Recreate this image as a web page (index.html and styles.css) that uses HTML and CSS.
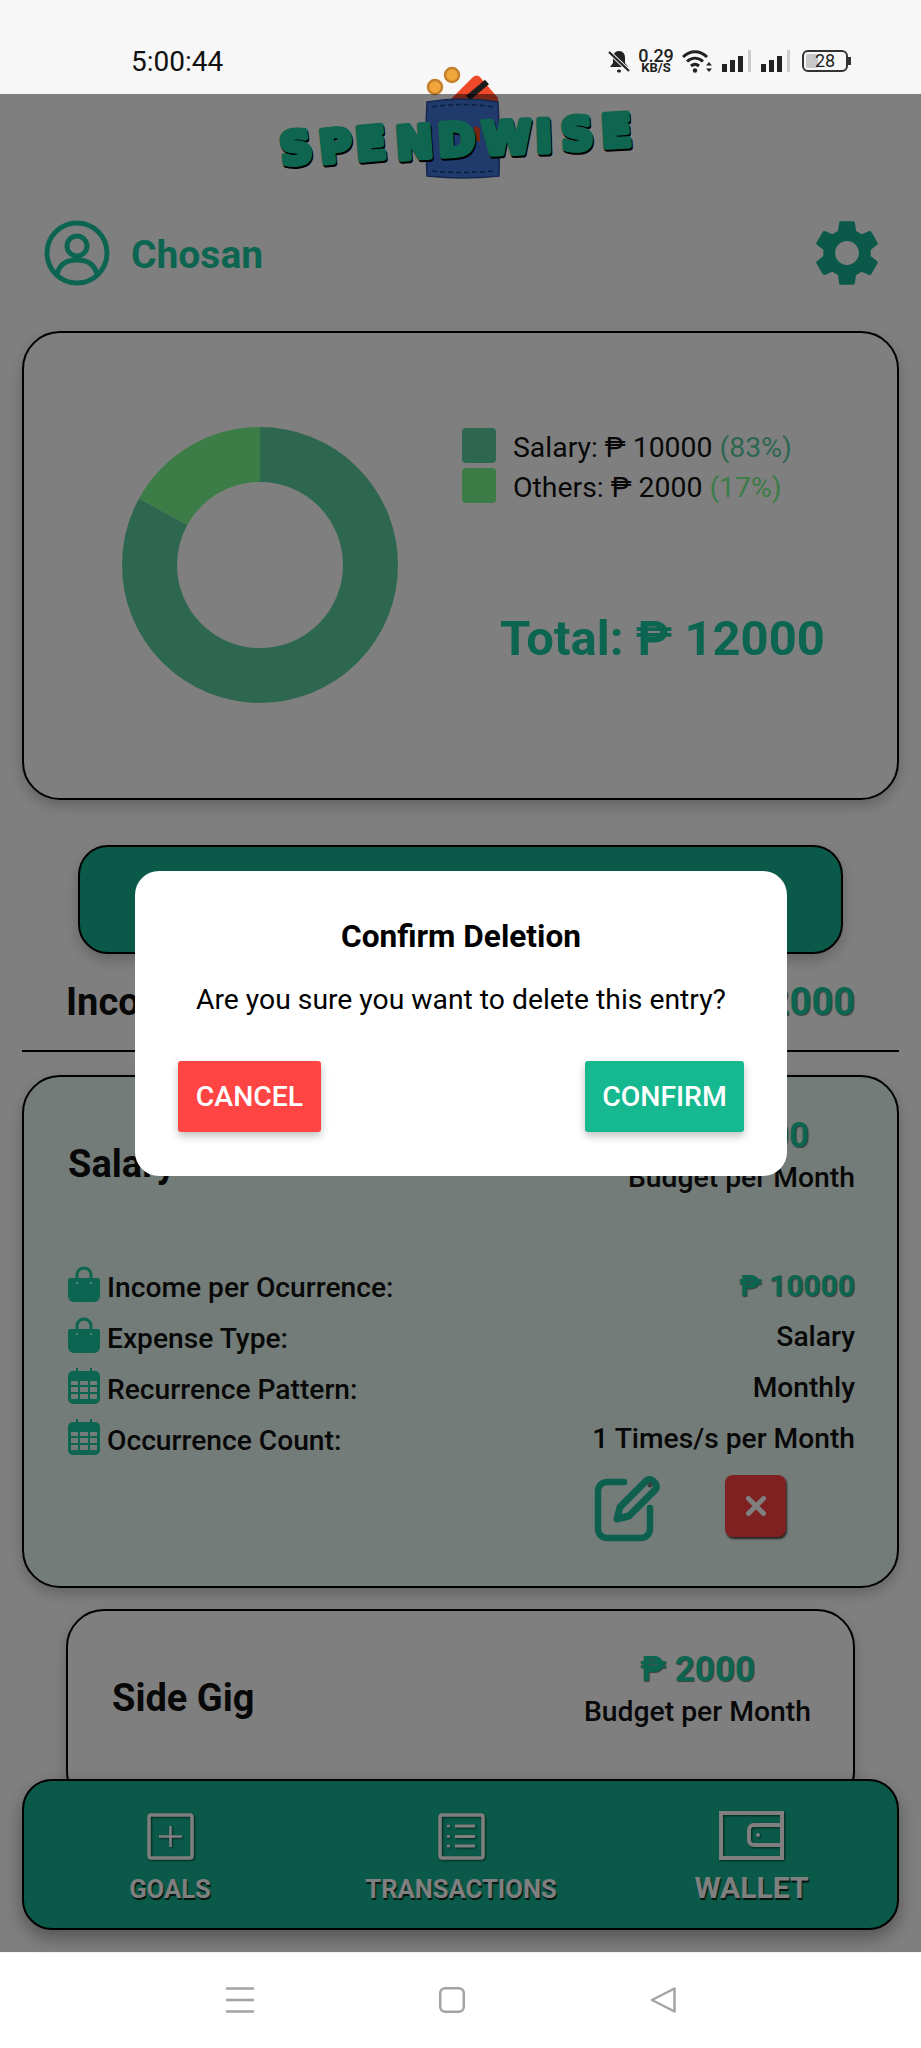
FILE: index.html
```html
<!DOCTYPE html>
<html lang="en">
<head>
  <meta charset="UTF-8" />
  <meta name="viewport" content="width=device-width, initial-scale=1.0"/>
  <title>SpendWise</title>
  <link rel="stylesheet" href="styles.css">
</head>
<body>
  <svg class="defs" width="0" height="0">
    <symbol id="bag" viewBox="0 0 32 36">
      <path d="M9 14V9a7 7 0 0 1 14 0v5" fill="none" stroke="currentColor" stroke-width="3"/>
      <path d="M2 12h28a2 2 0 0 1 2 2v16a6 6 0 0 1-6 6H6a6 6 0 0 1-6-6V14a2 2 0 0 1 2-2z" fill="currentColor"/>
      <circle cx="9" cy="17" r="1.2" fill="#9fe"/>
      <circle cx="23" cy="17" r="1.2" fill="#9fe"/>
    </symbol>
    <symbol id="cal" viewBox="0 0 32 36">
      <path d="M8 0h2v6H8zM22 0h2v6h-2z" fill="currentColor"/>
      <path fill-rule="evenodd" fill="currentColor" d="M5 3h22a5 5 0 0 1 5 5v23a5 5 0 0 1-5 5H5a5 5 0 0 1-5-5V8a5 5 0 0 1 5-5zM3 13v4h7v-4zM12 13v4h8v-4zM22 13v4h7v-4zM3 19v5h7v-5zM12 19v5h8v-5zM22 19v5h7v-5zM3 26v5h7v-5zM12 26v5h8v-5zM22 26v5h7v-5z"/>
    </symbol>
  </svg>

  <div class="phone">
    <div class="statusbar">
      <span class="clock">5:00:44</span>
      <div class="status-icons">
        <svg class="ic-bell" viewBox="0 0 22 23" width="22" height="23">
          <path d="M11 1c4 0 6 3 6 7v5l3 4H2l3-4V8c0-4 2-7 6-7z" fill="#222"/>
          <rect x="9" y="19.500" width="4" height="3" rx="1.500" fill="#222"/>
          <path d="M1 2l20 19" stroke="#f7f7f7" stroke-width="4"/>
          <path d="M1 2l20 19" stroke="#222" stroke-width="2.200"/>
        </svg>
        <div class="speed"><span>0.29</span><small>KB/S</small></div>
        <svg class="ic-wifi" viewBox="0 0 31 24" width="31" height="24">
          <path d="M1 8c7-7 17-7 24 0M5 12.500c5-4.500 11-4.500 16 0M9 17c3-2.500 5-2.500 8 0" fill="none" stroke="#222" stroke-width="3"/>
          <circle cx="13" cy="21.500" r="2.200" fill="#222"/>
          <path d="M27 13l3 3.500h-6zM27 23l-3-3.500h6z" fill="#222"/>
        </svg>
        <div class="signal"><i class="b1"></i><i class="b2"></i><i class="b3"></i><i class="b4"></i></div>
        <div class="signal"><i class="b1"></i><i class="b2"></i><i class="b3"></i><i class="b4"></i></div>
        <div class="battery"><b></b><span>28</span></div>
      </div>
    </div>

    <main class="app">
      <svg class="logo" viewBox="0 0 360 120" width="360" height="120">
        <circle cx="156" cy="27" r="7" fill="#f0a63a" stroke="#c4802c" stroke-width="2.500"/>
        <circle cx="173" cy="15" r="7" fill="#f0a63a" stroke="#c4802c" stroke-width="2.500"/>
        <path d="M169 42L194 17q4-3 7 0L219 38v6z" fill="#ee4a2a"/>
        <path d="M189 38L208 22" stroke="#1c1c1c" stroke-width="6"/>
        <path d="M148 42q36-6 71 0q2 36 1 74q-36 4-72 0q-2-38 0-74z" fill="#3f74d6" stroke="#2a4f9c" stroke-width="1.500"/>
        <path d="M153 47q30-5 61 0M153 111q30 3 62 0" fill="none" stroke="#1d3a78" stroke-width="1.500" stroke-dasharray="5 3"/>
        <path d="M195 66l6 2v14l-6-2z" fill="#ee4a2a"/>
        <text class="logo-shadow" x="3 42 78 118 160 204 257 283 323" y="105 103 100 99 96 94 92 90 87" rotate="-7 -6 -5 -4 -3 -2 -2 -3 -3" transform="translate(1 2)">SPENDWISE</text>
        <text class="logo-text" x="3 42 78 118 160 204 257 283 323" y="105 103 100 99 96 94 92 90 87" rotate="-7 -6 -5 -4 -3 -2 -2 -3 -3">SPENDWISE</text>
      </svg>

      <div class="content">
        <div class="user-row">
          <div class="user">
            <svg viewBox="0 0 66 66" width="66" height="66" fill="none" stroke="currentColor" stroke-width="5">
              <circle cx="33" cy="33" r="30"/>
              <circle cx="33" cy="26" r="10"/>
              <path d="M13 55c2-11 10-15 20-15s18 4 20 15"/>
            </svg>
            <span>Chosan</span>
          </div>
          <svg class="gear" viewBox="2.500 2 19 20" width="64" height="66">
            <path fill="currentColor" d="M19.140 12.940c.04-.3.06-.61.06-.94 0-.32-.02-.64-.07-.94l2.030-1.580c.18-.14.23-.41.12-.61l-1.920-3.320c-.12-.22-.37-.29-.59-.22l-2.390.96c-.5-.38-1.030-.7-1.620-.94l-.36-2.540c-.04-.24-.24-.41-.48-.41h-3.840c-.24 0-.43.17-.47.41l-.36 2.540c-.59.24-1.130.57-1.620.94l-2.390-.96c-.22-.08-.47 0-.59.22L2.740 8.870c-.12.21-.08.47.12.61l2.030 1.580c-.05.3-.09.63-.09.94s.02.64.07.94l-2.030 1.580c-.18.14-.23.41-.12.61l1.920 3.320c.12.22.37.29.59.22l2.390-.96c.5.38 1.030.7 1.620.94l.36 2.540c.05.24.24.41.48.41h3.840c.24 0 .44-.17.47-.41l.36-2.540c.59-.24 1.130-.56 1.620-.94l2.390.96c.22.08.47 0 .59-.22l1.920-3.320c.12-.22.07-.47-.12-.61l-2.010-1.580zM12 15.600c-1.980 0-3.600-1.620-3.600-3.600s1.620-3.600 3.600-3.600 3.600 1.620 3.600 3.600-1.620 3.600-3.600 3.600z"/>
          </svg>
        </div>

        <section class="chart-card">
          <svg class="donut" viewBox="0 0 276 276" width="276" height="276">
            <g transform="rotate(-90 138 138)" fill="none" stroke-width="55">
              <circle cx="138" cy="138" r="110.500" pathLength="100" stroke="#5cce9f" stroke-dasharray="83 17"/>
              <circle cx="138" cy="138" r="110.500" pathLength="100" stroke="#76f88e" stroke-dasharray="17 83" stroke-dashoffset="-83"/>
            </g>
          </svg>
          <div class="chart-side">
            <ul class="legend">
              <li><i class="swatch swatch-a"></i><span>Salary: ₱ 10000 <em class="pct-a">(83%)</em></span></li>
              <li><i class="swatch swatch-b"></i><span>Others: ₱ 2000 <em class="pct-b">(17%)</em></span></li>
            </ul>
            <div class="total">Total: ₱ 12000</div>
          </div>
        </section>

        <div class="add-btn"></div>

        <div class="summary">
          <span class="summary-label">Income</span>
          <span class="summary-value">₱ 12000</span>
        </div>

        <section class="card card-open">
          <div class="card-head">
            <span class="card-name">Salary</span>
            <div class="card-budget">
              <strong>₱ 10000</strong>
              <span>Budget per Month</span>
            </div>
          </div>
          <div class="details">
            <div class="row">
              <span class="row-label"><svg class="row-ic"><use href="#bag"/></svg>Income per Ocurrence:</span>
              <span class="row-value money">₱ 10000</span>
            </div>
            <div class="row">
              <span class="row-label"><svg class="row-ic"><use href="#bag"/></svg>Expense Type:</span>
              <span class="row-value">Salary</span>
            </div>
            <div class="row">
              <span class="row-label"><svg class="row-ic"><use href="#cal"/></svg>Recurrence Pattern:</span>
              <span class="row-value">Monthly</span>
            </div>
            <div class="row">
              <span class="row-label"><svg class="row-ic"><use href="#cal"/></svg>Occurrence Count:</span>
              <span class="row-value">1 Times/s per Month</span>
            </div>
            <div class="actions">
              <svg class="edit" viewBox="0 0 70 70" width="70" height="70" fill="none" stroke="currentColor" stroke-linecap="round" stroke-linejoin="round">
                <path d="M30 10H13a9 9 0 0 0-9 9v38a9 9 0 0 0 9 9h34a9 9 0 0 0 9-9V36" stroke-width="6.500"/>
                <path d="M23 47l3-12L52 9a5 5 0 0 1 7 0l2 2a5 5 0 0 1 0 7L35 44z" stroke-width="7"/>
                <circle cx="56" cy="13" r="2.500" fill="#737c78" stroke="none"/>
              </svg>
              <button class="del" type="button">
                <svg viewBox="0 0 24 24" width="26" height="26"><path d="M5 5l14 14M19 5L5 19" stroke="#fff" stroke-width="4.500" stroke-linecap="round"/></svg>
              </button>
            </div>
          </div>
        </section>

        <section class="card card-closed">
          <div class="card-head">
            <span class="card-name">Side Gig</span>
            <div class="card-budget">
              <strong>₱ 2000</strong>
              <span>Budget per Month</span>
            </div>
          </div>
        </section>
      </div>

      <nav class="tabbar">
        <a class="tab">
          <svg viewBox="0 0 47 47" width="47" height="47" fill="none" stroke="currentColor" stroke-width="3.500"><rect x="2" y="2" width="43" height="43" rx="2"/><path d="M23.500 13v21M12 23.500h23" stroke-width="2.500"/></svg>
          <span>GOALS</span>
        </a>
        <a class="tab">
          <svg viewBox="0 0 47 47" width="47" height="47" fill="none" stroke="currentColor" stroke-width="3.500"><rect x="2" y="2" width="43" height="43" rx="2"/><path d="M17 13h20M17 23.500h20M17 33h20" stroke-width="3"/><path d="M9 13h3M9 23.500h3M9 33h3" stroke-width="2.500"/></svg>
          <span>TRANSACTIONS</span>
        </a>
        <a class="tab tab-wallet">
          <svg viewBox="0 0 65 49" width="65" height="49" fill="none" stroke="currentColor" stroke-width="4"><path d="M63 14V2H2v45h61V34"/><path d="M63 14H35a5 5 0 0 0-5 5v10a5 5 0 0 0 5 5h28z"/><circle cx="39" cy="24" r="2" fill="currentColor" stroke="none"/></svg>
          <span>WALLET</span>
        </a>
      </nav>

      <div class="overlay">
        <div class="dialog">
          <h2>Confirm Deletion</h2>
          <p>Are you sure you want to delete this entry?</p>
          <div class="dialog-actions">
            <button class="btn btn-cancel" type="button">CANCEL</button>
            <button class="btn btn-confirm" type="button">CONFIRM</button>
          </div>
        </div>
      </div>
    </main>

    <div class="navbar">
      <svg viewBox="0 0 28 26" width="28" height="26" fill="none" stroke="#a3a3a3" stroke-width="2.500"><path d="M0 1.500h28M0 13h28M0 24.500h28"/></svg>
      <svg viewBox="0 0 26 26" width="26" height="26" fill="none" stroke="#a3a3a3" stroke-width="2.500"><rect x="1.250" y="1.250" width="23.500" height="23.500" rx="5"/></svg>
      <svg viewBox="0 0 26 26" width="26" height="26" fill="none" stroke="#a3a3a3" stroke-width="2.500" stroke-linejoin="round"><path d="M24.500 1.500v23L2 13z"/></svg>
    </div>
  </div>
</body>
</html>
```

FILE: styles.css
```css
* {
  box-sizing: border-box;
}
body {
  margin: 0;
  font-family: Roboto, "Liberation Sans", sans-serif;
  color: #111;
  background: #fff;
}
.defs {
  position: absolute;
}
.phone {
  width: 921px;
  height: 2048px;
  display: flex;
  flex-direction: column;
  overflow: hidden;
}

/* status bar */
.statusbar {
  height: 94px;
  flex: none;
  background: #f7f7f7;
  display: flex;
  align-items: center;
  padding: 28px 73px 0 131px;
  justify-content: space-between;
}
.clock {
  font-size: 28px;
  color: #111;
}
.status-icons {
  display: flex;
  align-items: center;
  gap: 9px;
}
.speed {
  display: flex;
  flex-direction: column;
  align-items: center;
  width: 34px;
  font-size: 18px;
  line-height: 13px;
  color: #222;
  font-weight: 500;
}
.speed small {
  font-size: 13px;
  line-height: 11px;
  font-weight: 700;
}
.signal {
  display: flex;
  align-items: flex-end;
  gap: 3px;
  height: 22px;
  width: 30px;
}
.signal i {
  width: 5px;
  background: #222;
}
.signal .b1 { height: 8px; }
.signal .b2 { height: 12px; }
.signal .b3 { height: 16px; }
.signal .b4 { height: 22px; background: #ccc; width: 3px; margin-left: 2px; }
.battery {
  position: relative;
  width: 46px;
  height: 22px;
  border: 2px solid #333;
  border-radius: 6px;
  margin-left: 2px;
  font-size: 18px;
  line-height: 18px;
  text-align: center;
  color: #222;
}
.battery b {
  position: absolute;
  left: 2px;
  top: 2px;
  bottom: 2px;
  width: 12px;
  background: #c8c8c8;
  border-radius: 2px;
}
.battery span {
  position: relative;
}
.battery::after {
  content: "";
  position: absolute;
  right: -5px;
  top: 5px;
  width: 3px;
  height: 8px;
  background: #333;
}

/* app */
.app {
  position: relative;
  flex: 1;
  display: flex;
  flex-direction: column;
  min-height: 0;
  background: #fff;
}
.logo {
  flex: none;
  display: block;
  margin: -34px 0 -4px 279px;
  overflow: visible;
}
.logo text {
  font-family: "DejaVu Sans", sans-serif;
  font-weight: 700;
  font-size: 44px;
  stroke-linejoin: round;
}
.logo-text {
  fill: #1ecca0;
  stroke: #1ecca0;
  stroke-width: 6px;
}
.logo-shadow {
  fill: #000;
  stroke: #000;
  stroke-width: 6px;
}
.content {
  flex: 1;
  min-height: 0;
  overflow: hidden;
  padding: 44px 22px 0;
}
.user-row {
  display: flex;
  align-items: center;
  justify-content: space-between;
  padding: 0 20px 0 22px;
  height: 66px;
  color: #19cba2;
}
.user {
  display: flex;
  align-items: center;
  gap: 21px;
  font-size: 39px;
  font-weight: 700;
}
.user span {
  margin-top: 3px;
}
.gear {
  color: #16b592;
}

/* chart */
.chart-card {
  margin-top: 45px;
  height: 469px;
  border: 2px solid #000;
  border-radius: 38px;
  box-shadow: 0 6px 14px rgba(0, 0, 0, 0.22);
  display: flex;
  padding: 94px 0 0 98px;
}
.donut {
  flex: none;
}
.chart-side {
  margin-left: 64px;
}
.legend {
  list-style: none;
  margin: 1px 0 0;
  padding: 0;
}
.legend li {
  display: flex;
  align-items: center;
  gap: 17px;
  height: 35px;
  margin-bottom: 5px;
  font-size: 28.400px;
}
.legend span {
  padding-top: 3px;
}
.legend em {
  font-style: normal;
}
.pct-a { color: #5cce9f; }
.pct-b { color: #76f88e; }
.swatch {
  width: 34px;
  height: 35px;
  border-radius: 4px;
  flex: none;
}
.swatch-a { background: #5cce9f; }
.swatch-b { background: #76f88e; }
.total {
  margin: 106px 0 0 38px;
  font-size: 49px;
  line-height: 60px;
  font-weight: 700;
  color: #19cba2;
  white-space: nowrap;
}

.add-btn {
  margin: 45px 56px 0;
  height: 109px;
  background: #16b592;
  border: 2px solid #000;
  border-radius: 30px;
  box-shadow: 0 6px 14px rgba(0, 0, 0, 0.22);
}
.summary {
  height: 98px;
  border-bottom: 2px solid #000;
  display: flex;
  justify-content: space-between;
  align-items: center;
  padding: 0 44px 0 44px;
  font-size: 38px;
  font-weight: 700;
}
.summary-value {
  color: #19cba2;
  text-shadow: 1px 1px 1px rgba(0, 0, 0, 0.5);
}

/* income cards */
.card {
  border: 2px solid #000;
  border-radius: 38px;
  box-shadow: 0 6px 14px rgba(0, 0, 0, 0.22);
  padding: 37px 42px 0 44px;
  margin-top: 23px;
}
.card-open {
  height: 513px;
  background: #e6f8f0;
}
.card-closed {
  margin: 21px 44px 0;
  height: 200px;
  background: #fff;
}
.card-head {
  display: flex;
  justify-content: space-between;
  align-items: center;
}
.card-name {
  font-size: 38px;
  font-weight: 700;
  margin-top: 16px;
}
.card-budget {
  display: flex;
  flex-direction: column;
  align-items: center;
  font-size: 28.300px;
  font-weight: 500;
}
.card-budget strong {
  font-size: 35px;
  line-height: 44px;
  font-weight: 700;
  color: #19cba2;
  text-shadow: 1px 1px 1px rgba(0, 0, 0, 0.5);
}
.card-budget span {
  line-height: 40px;
}
.details {
  margin-top: 40px;
  padding-top: 23px;
  border-top: 1px solid #eefbf5;
}
.row {
  height: 51px;
  display: flex;
  justify-content: space-between;
  align-items: center;
  font-size: 28.200px;
  font-weight: 500;
}
.row-label {
  display: flex;
  align-items: center;
  gap: 7px;
}
.row-ic {
  width: 32px;
  height: 36px;
  margin-top: -8px;
  color: #19cba2;
}
.row-value {
  margin-top: -4px;
}
.money {
  font-size: 30px;
  font-weight: 700;
  color: #19cba2;
  text-shadow: 1px 1px 1px rgba(0, 0, 0, 0.5);
}
.actions {
  display: flex;
  justify-content: flex-end;
  align-items: flex-start;
  gap: 61px;
  padding: 6px 69px 0 0;
}
.edit {
  color: #19c09a;
}
.del {
  width: 61px;
  height: 62px;
  margin-top: 3px;
  padding: 0;
  border: none;
  border-radius: 8px;
  background: #ff4240;
  box-shadow: 1px 2px 2px rgba(0, 0, 0, 0.7);
  display: flex;
  align-items: center;
  justify-content: center;
}

/* bottom tabs */
.tabbar {
  position: relative;
  flex: none;
  height: 151px;
  margin: 0 22px 22px;
  background: #16b592;
  border: 2px solid #000;
  border-radius: 30px;
  box-shadow: 0 8px 18px rgba(0, 0, 0, 0.35);
  display: grid;
  grid-template-columns: 292px 290px 1fr;
  padding-top: 32px;
  color: #fff;
}
.tab {
  display: flex;
  flex-direction: column;
  align-items: center;
  font-size: 25.600px;
  font-weight: 700;
  text-shadow: 1px 2px 1px rgba(0, 0, 0, 0.8);
}
.tab svg {
  filter: drop-shadow(1px 1px 1px rgba(0, 0, 0, 0.6));
  margin-bottom: 14px;
}
.tab-wallet {
  font-size: 30px;
  margin-top: -2px;
}
.tab-wallet svg {
  margin-bottom: 10px;
}

/* dialog */
.overlay {
  position: absolute;
  inset: 0;
  background: rgba(0, 0, 0, 0.5);
}
.dialog {
  position: absolute;
  left: 135px;
  top: 777px;
  width: 652px;
  height: 305px;
  background: #fff;
  border-radius: 24px;
  padding: 44px 43px 0;
  text-align: center;
  color: #000;
}
.dialog h2 {
  margin: 0;
  font-size: 31.600px;
  line-height: 44px;
  font-weight: 700;
}
.dialog p {
  margin: 21px 0 0;
  font-size: 28.300px;
  line-height: 40px;
}
.dialog-actions {
  display: flex;
  justify-content: space-between;
  margin-top: 41px;
}
.btn {
  height: 71px;
  border: none;
  border-radius: 3px;
  color: #fff;
  font-family: inherit;
  font-size: 28.400px;
  font-weight: 500;
  padding: 0;
  box-shadow: 0 4px 8px rgba(0, 0, 0, 0.25);
}
.btn-cancel {
  width: 143px;
  background: #ff4444;
}
.btn-confirm {
  width: 159px;
  background: #16b890;
}

/* android nav */
.navbar {
  height: 96px;
  flex: none;
  background: #fff;
  border-top: 1px solid #f4f4f4;
  display: flex;
  align-items: center;
  gap: 185px;
  padding: 0 0 2px 226px;
}
```
